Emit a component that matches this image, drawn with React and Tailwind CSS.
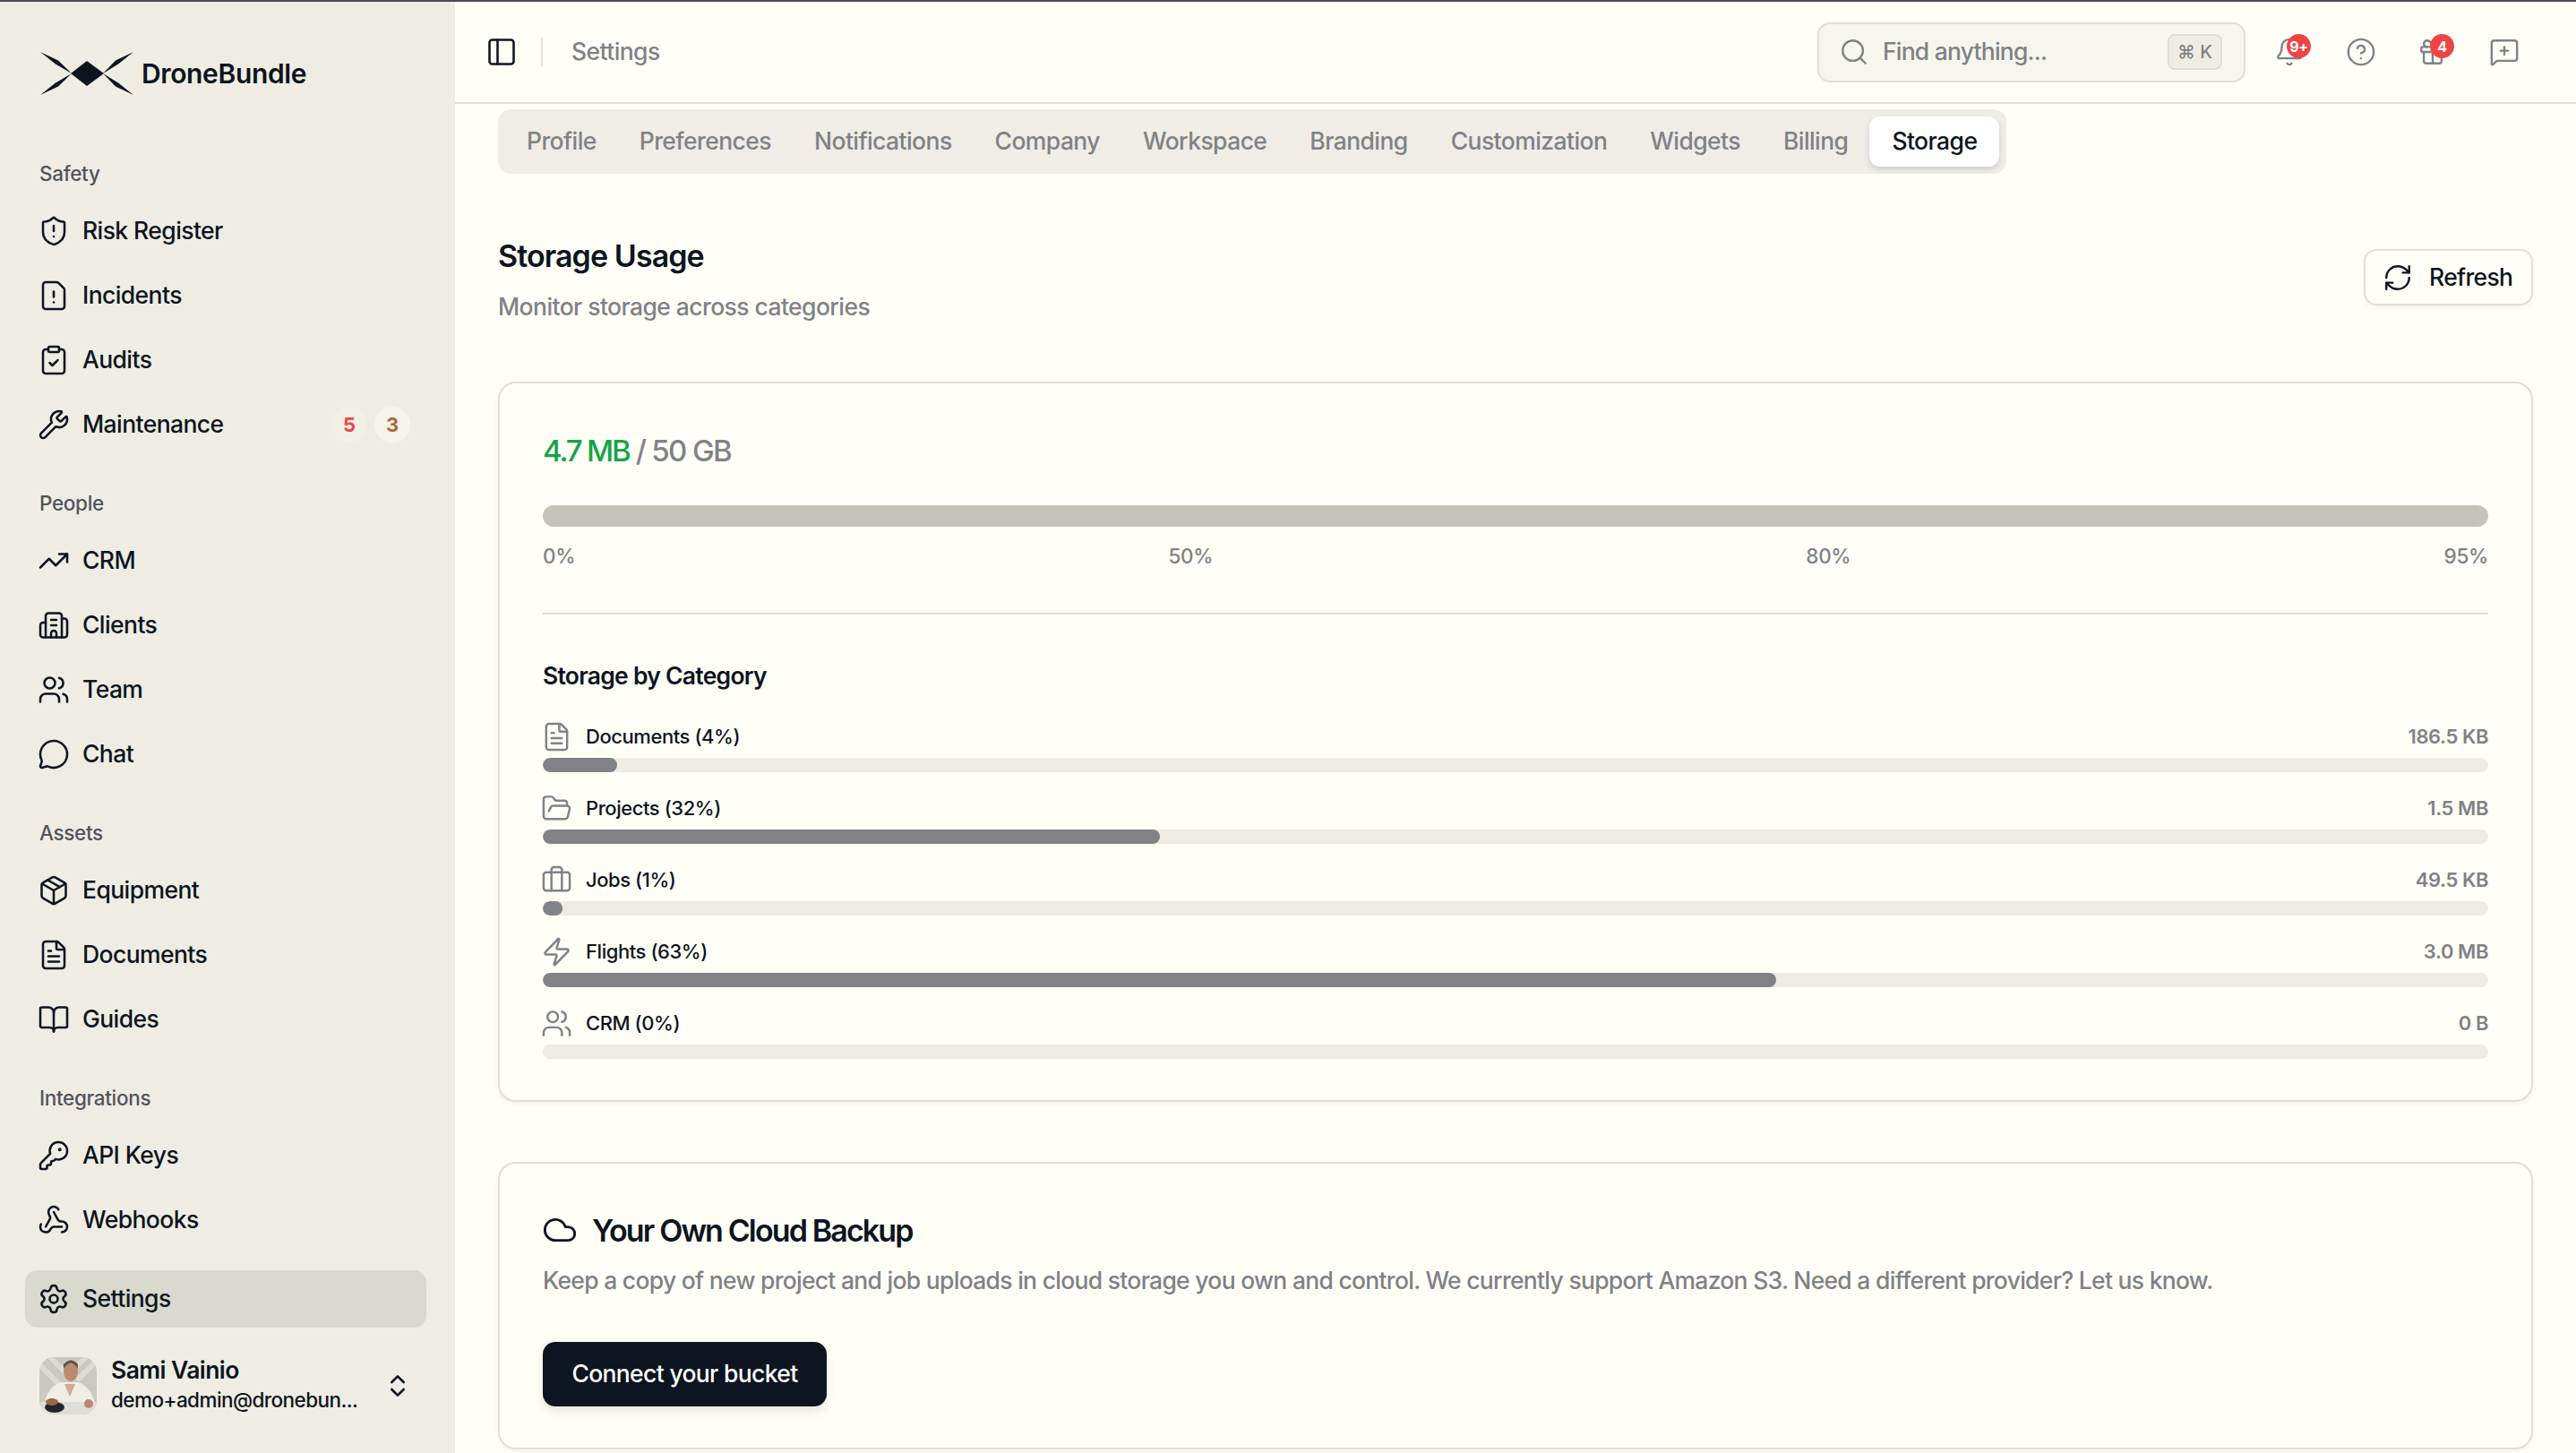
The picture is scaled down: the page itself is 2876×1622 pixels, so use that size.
import React from "react";
import {
  ShieldAlert, FileWarning, ClipboardCheck, Wrench, TrendingUp, Building2, Users, MessageCircle,
  Package, FileText, BookOpen, KeyRound, Webhook, Settings, ChevronsUpDown, Search, PanelLeft, Bell,
  CircleHelp, Gift, MessageSquarePlus, RefreshCw, Cloud, FolderOpen, Briefcase, Zap,
} from "lucide-react";

const groups = [
  { label: "Safety", items: [["Risk Register", ShieldAlert], ["Incidents", FileWarning], ["Audits", ClipboardCheck], ["Maintenance", Wrench, true]] },
  { label: "People", items: [["CRM", TrendingUp], ["Clients", Building2], ["Team", Users], ["Chat", MessageCircle]] },
  { label: "Assets", items: [["Equipment", Package], ["Documents", FileText], ["Guides", BookOpen]] },
  { label: "Integrations", items: [["API Keys", KeyRound], ["Webhooks", Webhook]] },
];

const tabs = ["Profile", "Preferences", "Notifications", "Company", "Workspace", "Branding", "Customization", "Widgets", "Billing"];

const categories = [
  { name: "Documents (4%)", size: "186.5 KB", Icon: FileText, width: "3.8%" },
  { name: "Projects (32%)", size: "1.5 MB", Icon: FolderOpen, width: "31.7%" },
  { name: "Jobs (1%)", size: "49.5 KB", Icon: Briefcase, width: "1%" },
  { name: "Flights (63%)", size: "3.0 MB", Icon: Zap, width: "63.4%" },
  { name: "CRM (0%)", size: "0 B", Icon: Users, width: "0%" },
];

const Logo = () => (
  <svg viewBox="0 0 104 48" className="w-[104px] h-[48px] shrink-0" fill="#0d1520">
    <path d="M34 24 L52 10 L71 24 L52 38 Z" />
    <path d="M0 0 L20 9.5 L35 24 L17 13.5 Z" />
    <path d="M104 0 L84 9.5 L70 24 L87 13.5 Z" />
    <path d="M0 48 L20 38.5 L35 24 L17 34.5 Z" />
    <path d="M104 48 L84 38.5 L70 24 L87 34.5 Z" />
  </svg>
);

const Avatar = () => (
  <svg viewBox="0 0 64 64" className="w-[64px] h-[64px] rounded-[16px] shrink-0">
    <rect width="64" height="64" fill="#c9c9c0" />
    <path d="M0 8 L22 30 M64 4 L42 26 M12 0 L30 18 M52 0 L38 14" stroke="#dcdcd4" strokeWidth="6" />
    <path d="M6 52 Q8 34 24 28 L44 28 Q58 34 62 52 Z" fill="#eeede6" />
    <path d="M28 30 L34 44 L40 30 Z" fill="#d3a88e" />
    <ellipse cx="35" cy="16" rx="8" ry="11" fill="#b98c70" />
    <path d="M27 13 Q35 0 43 13 L43 8 Q35 -1 27 8 Z" fill="#5a5149" />
    <rect y="50" width="64" height="14" fill="#dfded6" />
    <ellipse cx="17" cy="56" rx="11" ry="6" fill="#23262c" />
    <ellipse cx="14" cy="50" rx="7" ry="4" fill="#9a6a44" />
    <circle cx="55" cy="52" r="5" fill="#bd8673" />
  </svg>
);

const NavItem = ({ name, Icon, badges, active }) => (
  <div className={`flex items-center h-[64px] px-[14px] gap-[14px] rounded-[14px] ${active ? "bg-[#d9d9cd]" : ""}`}>
    <Icon className="w-[36px] h-[36px] shrink-0" strokeWidth={1.7} />
    <span className="text-[26.5px] font-medium tracking-[-0.022em]">{name}</span>
    {badges && (
      <div className="ml-auto mr-[4px] flex items-center gap-[8px] text-[22px] font-bold">
        <span className="w-[40px] h-[40px] rounded-full bg-[#f1efe6] text-[#ef4444] flex items-center justify-center">5</span>
        <span className="w-[40px] h-[40px] rounded-full bg-[#f5f3eb] text-[#a96a3f] flex items-center justify-center">3</span>
      </div>
    )}
  </div>
);

const Sidebar = () => (
  <aside className="w-[508px] h-full shrink-0 bg-[#efede3] text-[#0d1520] flex flex-col pl-[28px] pr-[32px]">
    <div className="flex items-center gap-[9px] h-[164px] px-[17px] pb-[4px]">
      <Logo />
      <span className="text-[30px] font-semibold tracking-[-0.012em]">DroneBundle</span>
    </div>
    <div className="flex flex-col gap-[28px]">
      {groups.map((g) => (
        <div key={g.label}>
          <div className="h-[56px] mb-[4px] px-[16px] flex items-center text-[22.5px] font-medium text-[#52535c] tracking-[-0.015em]">{g.label}</div>
          <div className="flex flex-col gap-[8px]">
            {g.items.map(([name, Icon, badges]) => (
              <NavItem key={name} name={name} Icon={Icon} badges={badges} />
            ))}
          </div>
        </div>
      ))}
    </div>
    <div className="mt-[24px]">
      <NavItem name="Settings" Icon={Settings} active />
    </div>
    <div className="mt-[32px] px-[16px] flex items-center gap-[16px]">
      <Avatar />
      <div className="flex-1 min-w-0 -mt-[2px]">
        <div className="text-[26.5px] leading-[34px] font-semibold tracking-[-0.022em]">Sami Vainio</div>
        <div className="text-[22.5px] leading-[34px] font-medium tracking-[-0.025em] whitespace-nowrap">demo+admin@dronebun...</div>
      </div>
      <ChevronsUpDown className="w-[32px] h-[32px] shrink-0" strokeWidth={2} />
    </div>
  </aside>
);

const HeaderIcon = ({ Icon, badge }) => (
  <div className="relative w-[44px] h-[44px] flex items-center justify-center text-[#808285]">
    <Icon className="w-[34px] h-[34px]" strokeWidth={1.7} />
    {badge && (
      <span className="absolute top-[2px] left-[19px] w-[27px] h-[27px] rounded-full bg-[#ef4444] text-white text-[16px] font-bold tracking-[-0.02em] flex items-center justify-center">{badge}</span>
    )}
  </div>
);

const Header = () => (
  <header className="h-[114px] shrink-0 border-b-2 border-[#e0dfd3] flex items-center pl-[34px] pr-[58px]">
    <PanelLeft className="w-[36px] h-[36px] text-[#0d1520]" strokeWidth={1.7} />
    <div className="w-[2px] h-[32px] bg-[#e0dfd3] ml-[26px] mr-[32px]" />
    <span className="text-[26.5px] font-medium text-[#808285] tracking-[-0.022em]">Settings</span>
    <div className="ml-auto w-[478px] h-[67px] rounded-[14px] border-2 border-[#e0dfd3] bg-[#f7f6ee] flex items-center pl-[22px] pr-[24px] text-[#808285]">
      <Search className="w-[34px] h-[34px] shrink-0" strokeWidth={1.7} />
      <span className="ml-[15px] text-[26.5px] font-medium tracking-[-0.03em]">Find anything...</span>
      <span className="ml-auto w-[61px] h-[40px] rounded-[8px] border-2 border-[#e0dfd3] bg-[#efede3] flex items-center justify-center text-[20px] font-medium">⌘ K</span>
    </div>
    <div className="ml-[27px] flex items-center gap-[36px]">
      <HeaderIcon Icon={Bell} badge="9+" />
      <HeaderIcon Icon={CircleHelp} />
      <HeaderIcon Icon={Gift} badge="4" />
      <HeaderIcon Icon={MessageSquarePlus} />
    </div>
  </header>
);

const Card = ({ className, children }) => (
  <section className={`border-2 border-[#e0dfd3] rounded-[20px] shadow-[0_2px_6px_rgba(30,30,20,0.06)] px-[48px] ${className}`}>{children}</section>
);

const CategoryRow = ({ name, size, Icon, width }) => (
  <div>
    <div className="h-[36px] flex items-center text-[22px] font-medium tracking-[-0.02em]">
      <Icon className="w-[35px] h-[35px] -ml-[2px] mr-[15px] text-[#808285] shrink-0" strokeWidth={1.7} />
      <span>{name}</span>
      <span className="ml-auto font-semibold text-[#808285]">{size}</span>
    </div>
    <div className="mt-[6px] h-[16px] rounded-full bg-[#edebe3] overflow-hidden">
      <div className="h-full rounded-full bg-[#808285]" style={{ width }} />
    </div>
  </div>
);

const Main = () => (
  <main className="flex-1 h-full flex flex-col min-w-0 overflow-hidden">
    <Header />
    <div className="px-[48px] pt-[6px] flex flex-col">
      <div className="self-start h-[72px] rounded-[14px] bg-[#efede6] p-[8px] flex items-stretch text-[26.5px] font-medium tracking-[-0.0218em]">
        {tabs.map((t) => (
          <div key={t} className="px-[24px] flex items-center text-[#808285]">{t}</div>
        ))}
        <div className="px-[25px] flex items-center bg-white rounded-[12px] text-[#0d1520] shadow-[0_3px_6px_rgba(30,30,20,0.15)]">Storage</div>
      </div>

      <div className="mt-[70px] flex justify-between">
        <div>
          <h1 className="text-[34px] leading-[44px] font-semibold tracking-[-0.027em] text-[#0d1520]">Storage Usage</h1>
          <p className="mt-[14px] text-[26.5px] leading-[40px] font-medium tracking-[-0.022em] text-[#808285]">Monitor storage across categories</p>
        </div>
        <button className="mt-[14px] w-[189px] h-[63px] rounded-[14px] border-2 border-[#e0dfd3] shadow-[0_2px_6px_rgba(30,30,20,0.06)] flex items-center pl-[19px] text-[26.5px] font-medium tracking-[-0.025em] text-[#0d1520]">
          <RefreshCw className="w-[34px] h-[34px] shrink-0" strokeWidth={1.7} />
          <span className="ml-[18px]">Refresh</span>
        </button>
      </div>

      <Card className="mt-[64px] pt-[51px] pb-[46px] text-[#0d1520]">
        <div className="text-[33px] leading-[48px] font-medium tracking-[-0.05em] text-[#808285]">
          <span className="text-[#16a34a] tracking-[-0.065em]">4.7 MB</span> / 50 GB
        </div>
        <div className="mt-[37px] h-[24px] rounded-full bg-[#c4c3b7]" />
        <div className="mt-[17px] flex justify-between text-[22.5px] leading-[32px] font-medium tracking-[-0.015em] text-[#808285]">
          <span>0%</span>
          <span>50%</span>
          <span>80%</span>
          <span>95%</span>
        </div>
        <div className="mt-[47px] h-[2px] bg-[#dcdcd0]" />
        <h2 className="mt-[50px] text-[26.5px] leading-[36px] font-semibold tracking-[-0.028em]">Storage by Category</h2>
        <div className="mt-[32px] flex flex-col gap-[22px]">
          {categories.map((c) => (
            <CategoryRow key={c.name} {...c} />
          ))}
        </div>
      </Card>

      <Card className="mt-[67px] pt-[50px] pb-[46px]">
        <div className="flex items-center h-[48px] text-[#0d1520]">
          <Cloud className="w-[40px] h-[40px] -ml-[1px] shrink-0" strokeWidth={1.7} />
          <h2 className="ml-[16px] text-[34px] font-semibold tracking-[-0.055em]">Your Own Cloud Backup</h2>
        </div>
        <p className="mt-[12px] text-[26.5px] leading-[40px] font-medium tracking-[-0.027em] text-[#808285] whitespace-nowrap">
          Keep a copy of new project and job uploads in cloud storage you own and control. We currently support Amazon S3. Need a different provider? Let us know.
        </p>
        <button className="mt-[49px] w-[317px] h-[72px] rounded-[14px] bg-[#0d1520] text-white text-[26.5px] font-medium tracking-[-0.025em] shadow-[0_6px_12px_rgba(30,30,20,0.1)]">
          Connect your bucket
        </button>
      </Card>
    </div>
  </main>
);

export default function App() {
  return (
    <div className="w-[2876px] h-[1622px] overflow-hidden bg-[#fffff8] font-['Inter',sans-serif] flex flex-col">
      <div className="h-[2px] bg-[#4b4b50] shrink-0" />
      <div className="flex flex-1 min-h-0">
        <Sidebar />
        <Main />
      </div>
    </div>
  );
}
